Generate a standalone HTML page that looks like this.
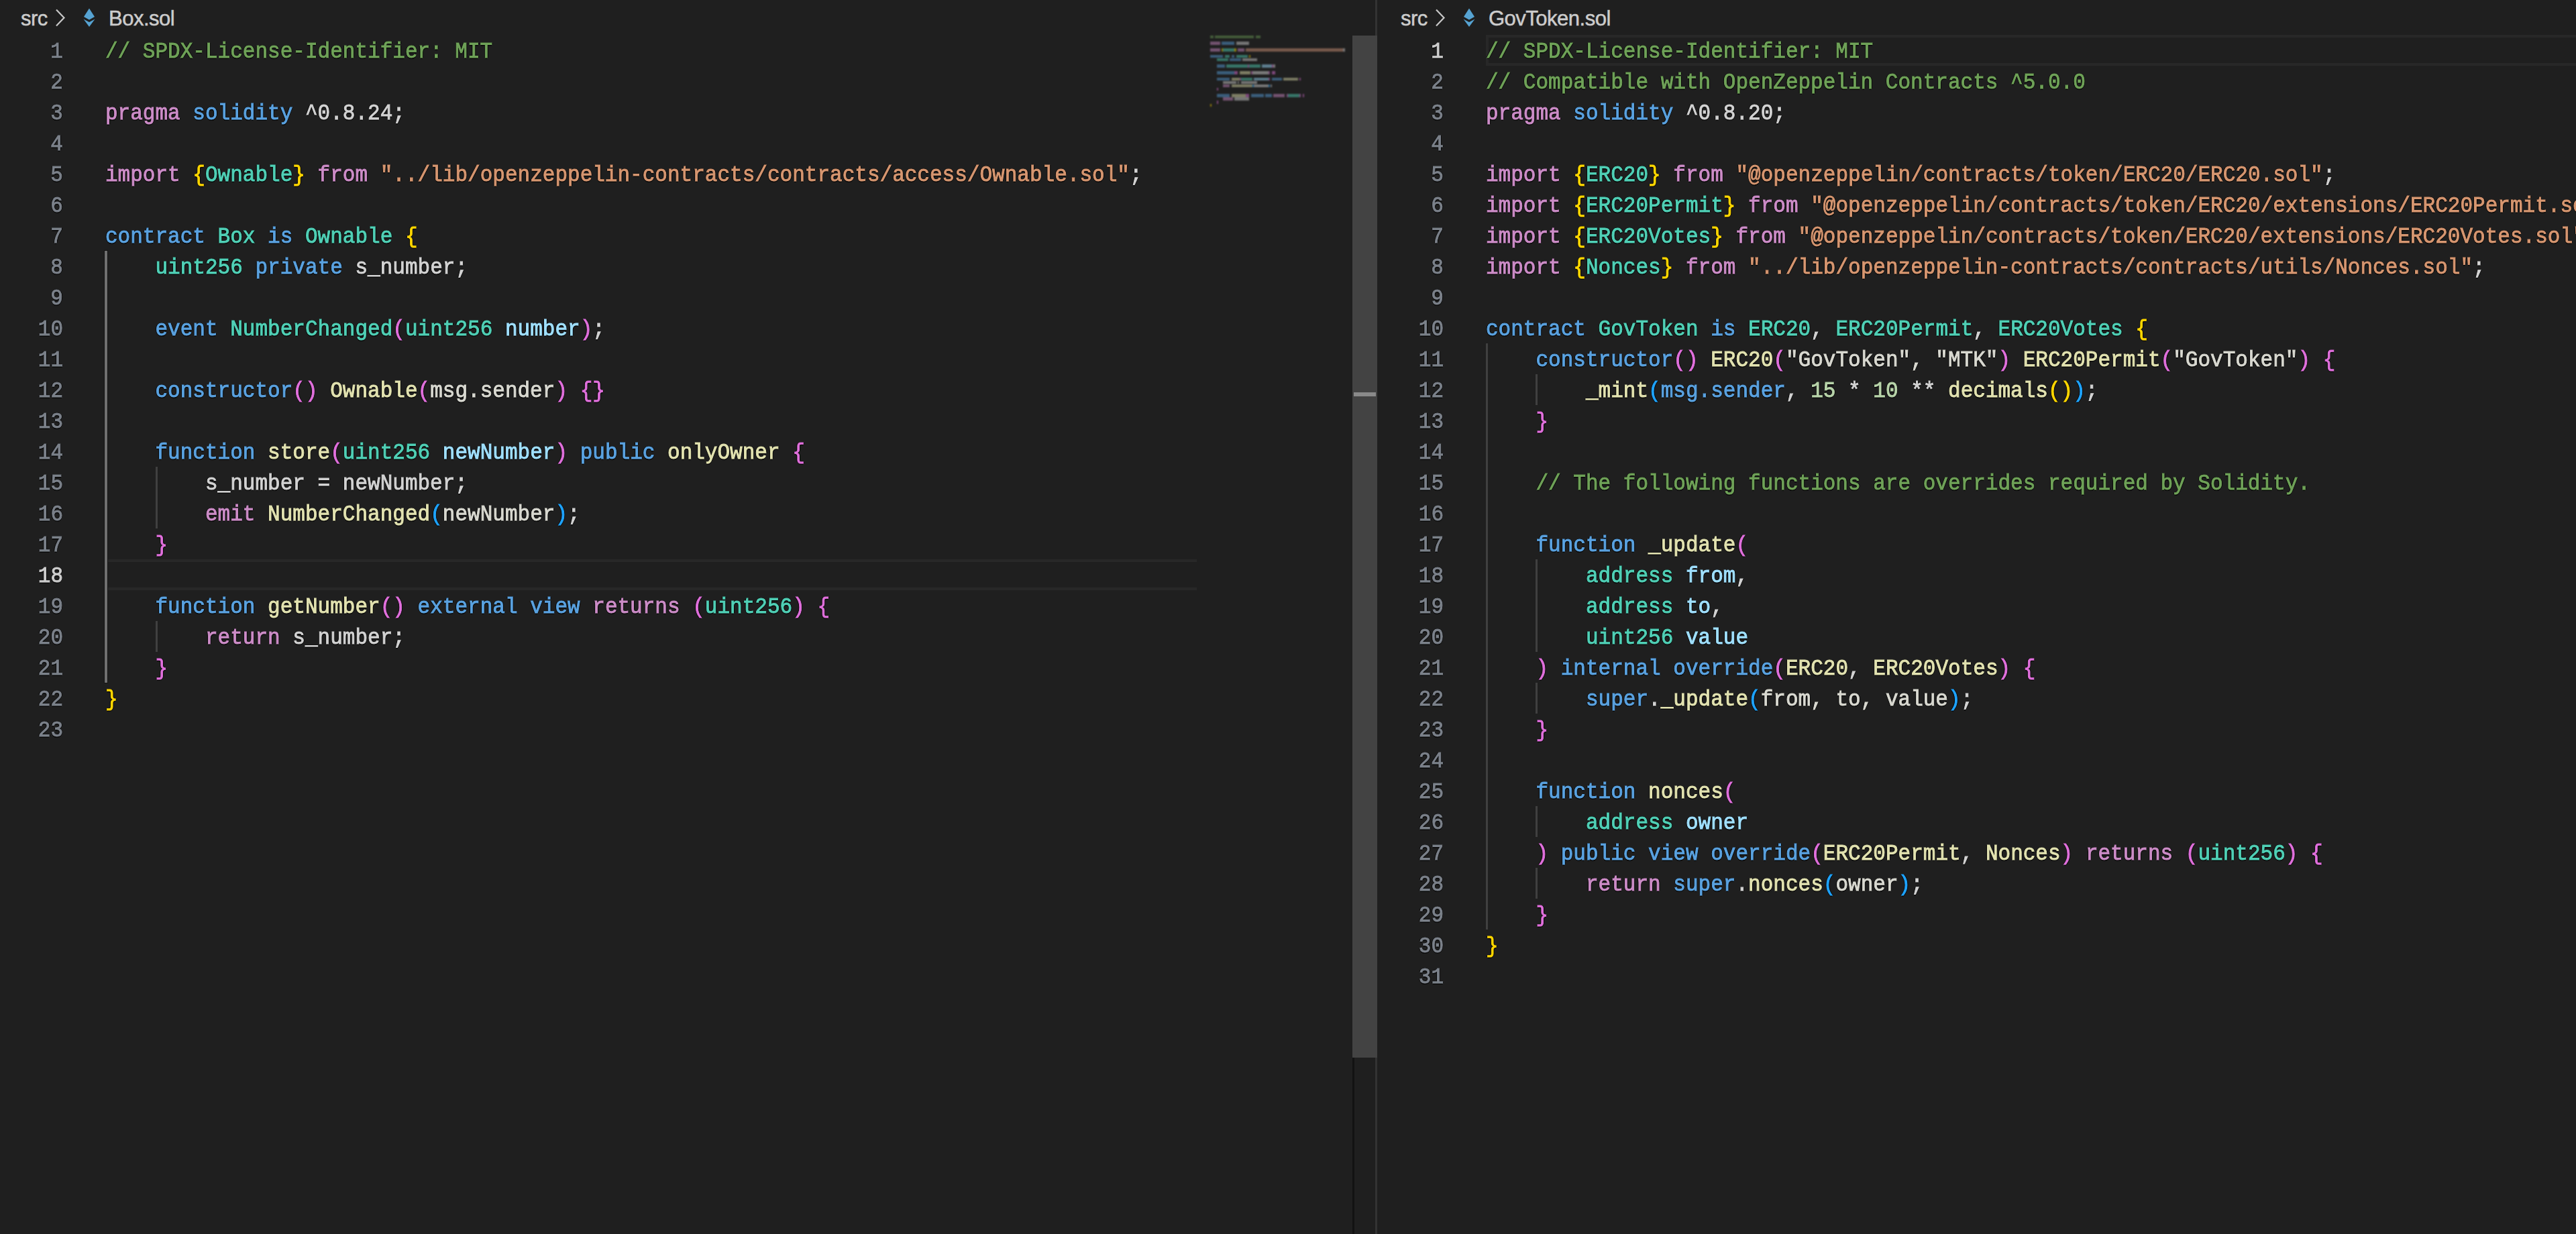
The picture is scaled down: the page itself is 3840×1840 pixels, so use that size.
<!DOCTYPE html>
<html><head><meta charset="utf-8"><style>
html,body{margin:0;padding:0;background:#1f1f1f;width:3840px;height:1840px;overflow:hidden;position:relative}
.code,.ln{position:absolute;font-family:"Liberation Mono",monospace;font-size:33px;line-height:46px;white-space:pre;-webkit-text-stroke:1px currentColor;text-shadow:1.5px 0 0 rgba(0,0,0,.75),-1.5px 0 0 rgba(0,0,0,.75),0 1.5px 0 rgba(0,0,0,.75),0 -1.5px 0 rgba(0,0,0,.75)}
.code{transform:scaleX(0.94026);transform-origin:0 0;color:#cccccc}
.ln{width:120px;text-align:right;color:#7b818a;transform:scaleX(0.94026);transform-origin:100% 0}
.ln.act{color:#cccccc}
.k{color:#5aa2e0}.p{color:#cc8cc7}.t{color:#50d0b6}.f{color:#e2e2b0}.v{color:#a0e0ff}.s{color:#d69670}
.c{color:#6fa258}.n{color:#b8d4aa}.d{color:#d2d2d2}.w{color:#d8d8d0}.y{color:#ffd700}.o{color:#e070dc}.b{color:#1fa4ff}
.cur{position:absolute;height:46px;box-sizing:border-box;border:4px solid #282828;border-right:0}
.g{position:absolute;width:3px;background:#404040}
.ga{background:#707070;width:4px;margin-left:-1px;box-shadow:0 0 0 1px #141414}
.bc{position:absolute;top:0;height:52px;font-family:"Liberation Sans",sans-serif;font-size:31px;letter-spacing:-0.5px;color:#cccccc;white-space:pre;-webkit-text-stroke:0.5px #cccccc}
.bc span,.bc svg{position:absolute}
.mm{position:absolute;left:0;top:0;width:2016px;height:220px;filter:blur(0.9px)}.mm i{position:absolute;height:4.6px;opacity:.5}
.sb{position:absolute}
</style></head><body>
<div class="bc" style="left:0px">
<span style="left:31px;top:9.5px">src</span>
<svg style="left:81px;top:13px" width="18" height="28" viewBox="0 0 18 28"><path d="M3 1.5 L14.5 13.5 L3 25.5" stroke="#c8c8c8" stroke-width="2.2" fill="none"/></svg>
<svg style="left:123px;top:12px" width="20" height="30" viewBox="0 0 20 30"><path d="M10 0.5 L18 13 L10 17.5 L2 13 Z" fill="#56a3d2"/><path d="M1.5 16.5 L10 21 L18.5 16.5 L10 28 Z" fill="#56a3d2"/></svg>
<span style="left:162px;top:9.5px">Box.sol</span>
</div>
<div class="bc" style="left:2057px">
<span style="left:31px;top:9.5px">src</span>
<svg style="left:81px;top:13px" width="18" height="28" viewBox="0 0 18 28"><path d="M3 1.5 L14.5 13.5 L3 25.5" stroke="#c8c8c8" stroke-width="2.2" fill="none"/></svg>
<svg style="left:123px;top:12px" width="20" height="30" viewBox="0 0 20 30"><path d="M10 0.5 L18 13 L10 17.5 L2 13 Z" fill="#56a3d2"/><path d="M1.5 16.5 L10 21 L18.5 16.5 L10 28 Z" fill="#56a3d2"/></svg>
<span style="left:162px;top:9.5px">GovToken.sol</span>
</div>
<div style="position:absolute;left:0;top:0;width:2016px;height:1840px;overflow:hidden">
<div class="cur" style="left:157.0px;top:834px;width:1627px"></div>
<div class="g ga" style="left:157.0px;top:374px;height:644px"></div>
<div class="g" style="left:231.5px;top:696px;height:92px"></div>
<div class="g" style="left:231.5px;top:926px;height:46px"></div>
<div class="ln" style="left:-26.0px;top:54.8px">1</div>
<div class="code" style="left:157.0px;top:54.8px"><span class="c">// SPDX-License-Identifier: MIT</span></div>
<div class="ln" style="left:-26.0px;top:100.8px">2</div>
<div class="ln" style="left:-26.0px;top:146.8px">3</div>
<div class="code" style="left:157.0px;top:146.8px"><span class="p">pragma</span> <span class="k">solidity</span><span class="d"> ^0.8.24;</span></div>
<div class="ln" style="left:-26.0px;top:192.8px">4</div>
<div class="ln" style="left:-26.0px;top:238.8px">5</div>
<div class="code" style="left:157.0px;top:238.8px"><span class="p">import</span> <span class="y">{</span><span class="t">Ownable</span><span class="y">}</span> <span class="p">from</span> <span class="s">&quot;../lib/openzeppelin-contracts/contracts/access/Ownable.sol&quot;</span><span class="d">;</span></div>
<div class="ln" style="left:-26.0px;top:284.8px">6</div>
<div class="ln" style="left:-26.0px;top:330.8px">7</div>
<div class="code" style="left:157.0px;top:330.8px"><span class="k">contract</span> <span class="t">Box</span> <span class="k">is</span> <span class="t">Ownable</span> <span class="y">{</span></div>
<div class="ln" style="left:-26.0px;top:376.8px">8</div>
<div class="code" style="left:157.0px;top:376.8px">    <span class="t">uint256</span> <span class="k">private</span><span class="d"> s_number;</span></div>
<div class="ln" style="left:-26.0px;top:422.8px">9</div>
<div class="ln" style="left:-26.0px;top:468.8px">10</div>
<div class="code" style="left:157.0px;top:468.8px">    <span class="k">event</span> <span class="t">NumberChanged</span><span class="o">(</span><span class="t">uint256</span> <span class="v">number</span><span class="o">)</span><span class="d">;</span></div>
<div class="ln" style="left:-26.0px;top:514.8px">11</div>
<div class="ln" style="left:-26.0px;top:560.8px">12</div>
<div class="code" style="left:157.0px;top:560.8px">    <span class="k">constructor</span><span class="o">()</span> <span class="f">Ownable</span><span class="o">(</span><span class="w">msg.sender</span><span class="o">)</span> <span class="o">{}</span></div>
<div class="ln" style="left:-26.0px;top:606.8px">13</div>
<div class="ln" style="left:-26.0px;top:652.8px">14</div>
<div class="code" style="left:157.0px;top:652.8px">    <span class="k">function</span> <span class="f">store</span><span class="o">(</span><span class="t">uint256</span> <span class="v">newNumber</span><span class="o">)</span> <span class="k">public</span> <span class="f">onlyOwner</span> <span class="o">{</span></div>
<div class="ln" style="left:-26.0px;top:698.8px">15</div>
<div class="code" style="left:157.0px;top:698.8px"><span class="d">        s_number = newNumber;</span></div>
<div class="ln" style="left:-26.0px;top:744.8px">16</div>
<div class="code" style="left:157.0px;top:744.8px">        <span class="p">emit</span> <span class="f">NumberChanged</span><span class="b">(</span><span class="w">newNumber</span><span class="b">)</span><span class="d">;</span></div>
<div class="ln" style="left:-26.0px;top:790.8px">17</div>
<div class="code" style="left:157.0px;top:790.8px">    <span class="o">}</span></div>
<div class="ln act" style="left:-26.0px;top:836.8px">18</div>
<div class="ln" style="left:-26.0px;top:882.8px">19</div>
<div class="code" style="left:157.0px;top:882.8px">    <span class="k">function</span> <span class="f">getNumber</span><span class="o">()</span> <span class="k">external</span> <span class="k">view</span> <span class="p">returns</span> <span class="o">(</span><span class="t">uint256</span><span class="o">)</span> <span class="o">{</span></div>
<div class="ln" style="left:-26.0px;top:928.8px">20</div>
<div class="code" style="left:157.0px;top:928.8px">        <span class="p">return</span><span class="d"> s_number;</span></div>
<div class="ln" style="left:-26.0px;top:974.8px">21</div>
<div class="code" style="left:157.0px;top:974.8px">    <span class="o">}</span></div>
<div class="ln" style="left:-26.0px;top:1020.8px">22</div>
<div class="code" style="left:157.0px;top:1020.8px"><span class="y">}</span></div>
<div class="ln" style="left:-26.0px;top:1066.8px">23</div>
<div class="mm"><i style="left:1804.0px;top:52.6px;width:4.8px;background:#6a9955"></i>
<i style="left:1811.3px;top:52.6px;width:58.1px;background:#6a9955"></i>
<i style="left:1871.8px;top:52.6px;width:7.3px;background:#6a9955"></i>
<i style="left:1804.0px;top:62.3px;width:14.5px;background:#c586c0"></i>
<i style="left:1820.9px;top:62.3px;width:19.4px;background:#569cd6"></i>
<i style="left:1842.7px;top:62.3px;width:19.4px;background:#cccccc"></i>
<i style="left:1804.0px;top:72.1px;width:14.5px;background:#c586c0"></i>
<i style="left:1820.9px;top:72.1px;width:2.4px;background:#ffd700"></i>
<i style="left:1823.4px;top:72.1px;width:16.9px;background:#4ec9b0"></i>
<i style="left:1840.3px;top:72.1px;width:2.4px;background:#ffd700"></i>
<i style="left:1845.1px;top:72.1px;width:9.7px;background:#c586c0"></i>
<i style="left:1857.2px;top:72.1px;width:145.2px;background:#ce9178"></i>
<i style="left:2002.4px;top:72.1px;width:2.4px;background:#cccccc"></i>
<i style="left:1804.0px;top:81.8px;width:19.4px;background:#569cd6"></i>
<i style="left:1825.8px;top:81.8px;width:7.3px;background:#4ec9b0"></i>
<i style="left:1835.5px;top:81.8px;width:4.8px;background:#569cd6"></i>
<i style="left:1842.7px;top:81.8px;width:16.9px;background:#4ec9b0"></i>
<i style="left:1862.1px;top:81.8px;width:2.4px;background:#ffd700"></i>
<i style="left:1813.7px;top:86.7px;width:16.9px;background:#4ec9b0"></i>
<i style="left:1833.0px;top:86.7px;width:16.9px;background:#569cd6"></i>
<i style="left:1852.4px;top:86.7px;width:21.8px;background:#cccccc"></i>
<i style="left:1813.7px;top:96.4px;width:12.1px;background:#569cd6"></i>
<i style="left:1828.2px;top:96.4px;width:31.5px;background:#4ec9b0"></i>
<i style="left:1859.7px;top:96.4px;width:2.4px;background:#da70d6"></i>
<i style="left:1862.1px;top:96.4px;width:16.9px;background:#4ec9b0"></i>
<i style="left:1881.4px;top:96.4px;width:14.5px;background:#9cdcfe"></i>
<i style="left:1896.0px;top:96.4px;width:2.4px;background:#da70d6"></i>
<i style="left:1898.4px;top:96.4px;width:2.4px;background:#cccccc"></i>
<i style="left:1813.7px;top:106.2px;width:26.6px;background:#569cd6"></i>
<i style="left:1840.3px;top:106.2px;width:4.8px;background:#da70d6"></i>
<i style="left:1847.6px;top:106.2px;width:16.9px;background:#dcdcaa"></i>
<i style="left:1864.5px;top:106.2px;width:2.4px;background:#da70d6"></i>
<i style="left:1866.9px;top:106.2px;width:24.2px;background:#d4d4d4"></i>
<i style="left:1891.1px;top:106.2px;width:2.4px;background:#da70d6"></i>
<i style="left:1896.0px;top:106.2px;width:4.8px;background:#da70d6"></i>
<i style="left:1813.7px;top:115.9px;width:19.4px;background:#569cd6"></i>
<i style="left:1835.5px;top:115.9px;width:12.1px;background:#dcdcaa"></i>
<i style="left:1847.6px;top:115.9px;width:2.4px;background:#da70d6"></i>
<i style="left:1850.0px;top:115.9px;width:16.9px;background:#4ec9b0"></i>
<i style="left:1869.3px;top:115.9px;width:21.8px;background:#9cdcfe"></i>
<i style="left:1891.1px;top:115.9px;width:2.4px;background:#da70d6"></i>
<i style="left:1896.0px;top:115.9px;width:14.5px;background:#569cd6"></i>
<i style="left:1912.9px;top:115.9px;width:21.8px;background:#dcdcaa"></i>
<i style="left:1937.1px;top:115.9px;width:2.4px;background:#da70d6"></i>
<i style="left:1823.4px;top:120.8px;width:19.4px;background:#cccccc"></i>
<i style="left:1845.1px;top:120.8px;width:2.4px;background:#cccccc"></i>
<i style="left:1850.0px;top:120.8px;width:24.2px;background:#cccccc"></i>
<i style="left:1823.4px;top:125.7px;width:9.7px;background:#c586c0"></i>
<i style="left:1835.5px;top:125.7px;width:31.5px;background:#dcdcaa"></i>
<i style="left:1866.9px;top:125.7px;width:2.4px;background:#179fff"></i>
<i style="left:1869.3px;top:125.7px;width:21.8px;background:#d4d4d4"></i>
<i style="left:1891.1px;top:125.7px;width:2.4px;background:#179fff"></i>
<i style="left:1893.5px;top:125.7px;width:2.4px;background:#cccccc"></i>
<i style="left:1813.7px;top:130.5px;width:2.4px;background:#da70d6"></i>
<i style="left:1813.7px;top:140.3px;width:19.4px;background:#569cd6"></i>
<i style="left:1835.5px;top:140.3px;width:21.8px;background:#dcdcaa"></i>
<i style="left:1857.2px;top:140.3px;width:4.8px;background:#da70d6"></i>
<i style="left:1864.5px;top:140.3px;width:19.4px;background:#569cd6"></i>
<i style="left:1886.3px;top:140.3px;width:9.7px;background:#569cd6"></i>
<i style="left:1898.4px;top:140.3px;width:16.9px;background:#c586c0"></i>
<i style="left:1917.7px;top:140.3px;width:2.4px;background:#da70d6"></i>
<i style="left:1920.2px;top:140.3px;width:16.9px;background:#4ec9b0"></i>
<i style="left:1937.1px;top:140.3px;width:2.4px;background:#da70d6"></i>
<i style="left:1941.9px;top:140.3px;width:2.4px;background:#da70d6"></i>
<i style="left:1823.4px;top:145.1px;width:14.5px;background:#c586c0"></i>
<i style="left:1840.3px;top:145.1px;width:21.8px;background:#cccccc"></i>
<i style="left:1813.7px;top:150.0px;width:2.4px;background:#da70d6"></i>
<i style="left:1804.0px;top:154.9px;width:2.4px;background:#ffd700"></i></div>
</div>
<div class="sb" style="left:2050px;top:0px;width:3px;height:1840px;background:#333333"></div>
<div class="sb" style="left:2016px;top:53px;width:37px;height:1524px;background:#434343"></div>
<div class="sb" style="left:2018px;top:585px;width:33px;height:6px;background:#8a8a8a"></div>
<div class="sb" style="left:2016px;top:1577px;width:3px;height:263px;background:#121212"></div>
<div style="position:absolute;left:2053px;top:0;width:1787px;height:1840px;overflow:hidden"><div style="position:absolute;left:-2053px;top:0;width:3840px;height:1840px">
<div class="cur" style="left:2214.5px;top:52px;width:1625px"></div>
<div class="g" style="left:2214.5px;top:512px;height:874px"></div>
<div class="g" style="left:2289.0px;top:558px;height:46px"></div>
<div class="g" style="left:2289.0px;top:834px;height:138px"></div>
<div class="g" style="left:2289.0px;top:1018px;height:46px"></div>
<div class="g" style="left:2289.0px;top:1202px;height:46px"></div>
<div class="g" style="left:2289.0px;top:1294px;height:46px"></div>
<div class="ln act" style="left:2031.5px;top:54.8px">1</div>
<div class="code" style="left:2214.5px;top:54.8px"><span class="c">// SPDX-License-Identifier: MIT</span></div>
<div class="ln" style="left:2031.5px;top:100.8px">2</div>
<div class="code" style="left:2214.5px;top:100.8px"><span class="c">// Compatible with OpenZeppelin Contracts ^5.0.0</span></div>
<div class="ln" style="left:2031.5px;top:146.8px">3</div>
<div class="code" style="left:2214.5px;top:146.8px"><span class="p">pragma</span> <span class="k">solidity</span><span class="d"> ^0.8.20;</span></div>
<div class="ln" style="left:2031.5px;top:192.8px">4</div>
<div class="ln" style="left:2031.5px;top:238.8px">5</div>
<div class="code" style="left:2214.5px;top:238.8px"><span class="p">import</span> <span class="y">{</span><span class="t">ERC20</span><span class="y">}</span> <span class="p">from</span> <span class="s">&quot;@openzeppelin/contracts/token/ERC20/ERC20.sol&quot;</span><span class="d">;</span></div>
<div class="ln" style="left:2031.5px;top:284.8px">6</div>
<div class="code" style="left:2214.5px;top:284.8px"><span class="p">import</span> <span class="y">{</span><span class="t">ERC20Permit</span><span class="y">}</span> <span class="p">from</span> <span class="s">&quot;@openzeppelin/contracts/token/ERC20/extensions/ERC20Permit.sol&quot;</span><span class="d">;</span></div>
<div class="ln" style="left:2031.5px;top:330.8px">7</div>
<div class="code" style="left:2214.5px;top:330.8px"><span class="p">import</span> <span class="y">{</span><span class="t">ERC20Votes</span><span class="y">}</span> <span class="p">from</span> <span class="s">&quot;@openzeppelin/contracts/token/ERC20/extensions/ERC20Votes.sol&quot;</span><span class="d">;</span></div>
<div class="ln" style="left:2031.5px;top:376.8px">8</div>
<div class="code" style="left:2214.5px;top:376.8px"><span class="p">import</span> <span class="y">{</span><span class="t">Nonces</span><span class="y">}</span> <span class="p">from</span> <span class="s">&quot;../lib/openzeppelin-contracts/contracts/utils/Nonces.sol&quot;</span><span class="d">;</span></div>
<div class="ln" style="left:2031.5px;top:422.8px">9</div>
<div class="ln" style="left:2031.5px;top:468.8px">10</div>
<div class="code" style="left:2214.5px;top:468.8px"><span class="k">contract</span> <span class="t">GovToken</span> <span class="k">is</span> <span class="t">ERC20</span><span class="d">, </span><span class="t">ERC20Permit</span><span class="d">, </span><span class="t">ERC20Votes</span> <span class="y">{</span></div>
<div class="ln" style="left:2031.5px;top:514.8px">11</div>
<div class="code" style="left:2214.5px;top:514.8px">    <span class="k">constructor</span><span class="o">()</span> <span class="f">ERC20</span><span class="o">(</span><span class="w">&quot;GovToken&quot;, &quot;MTK&quot;</span><span class="o">)</span> <span class="f">ERC20Permit</span><span class="o">(</span><span class="w">&quot;GovToken&quot;</span><span class="o">)</span> <span class="o">{</span></div>
<div class="ln" style="left:2031.5px;top:560.8px">12</div>
<div class="code" style="left:2214.5px;top:560.8px">        <span class="f">_mint</span><span class="b">(</span><span class="k">msg.sender</span><span class="d">, </span><span class="n">15</span><span class="d"> * </span><span class="n">10</span><span class="d"> ** </span><span class="f">decimals</span><span class="y">()</span><span class="b">)</span><span class="d">;</span></div>
<div class="ln" style="left:2031.5px;top:606.8px">13</div>
<div class="code" style="left:2214.5px;top:606.8px">    <span class="o">}</span></div>
<div class="ln" style="left:2031.5px;top:652.8px">14</div>
<div class="ln" style="left:2031.5px;top:698.8px">15</div>
<div class="code" style="left:2214.5px;top:698.8px">    <span class="c">// The following functions are overrides required by Solidity.</span></div>
<div class="ln" style="left:2031.5px;top:744.8px">16</div>
<div class="ln" style="left:2031.5px;top:790.8px">17</div>
<div class="code" style="left:2214.5px;top:790.8px">    <span class="k">function</span> <span class="f">_update</span><span class="o">(</span></div>
<div class="ln" style="left:2031.5px;top:836.8px">18</div>
<div class="code" style="left:2214.5px;top:836.8px">        <span class="t">address</span> <span class="v">from</span><span class="d">,</span></div>
<div class="ln" style="left:2031.5px;top:882.8px">19</div>
<div class="code" style="left:2214.5px;top:882.8px">        <span class="t">address</span> <span class="v">to</span><span class="d">,</span></div>
<div class="ln" style="left:2031.5px;top:928.8px">20</div>
<div class="code" style="left:2214.5px;top:928.8px">        <span class="t">uint256</span> <span class="v">value</span></div>
<div class="ln" style="left:2031.5px;top:974.8px">21</div>
<div class="code" style="left:2214.5px;top:974.8px">    <span class="o">)</span> <span class="k">internal</span> <span class="k">override</span><span class="o">(</span><span class="f">ERC20</span><span class="d">, </span><span class="f">ERC20Votes</span><span class="o">)</span> <span class="o">{</span></div>
<div class="ln" style="left:2031.5px;top:1020.8px">22</div>
<div class="code" style="left:2214.5px;top:1020.8px">        <span class="k">super</span><span class="d">.</span><span class="f">_update</span><span class="b">(</span><span class="w">from, to, value</span><span class="b">)</span><span class="d">;</span></div>
<div class="ln" style="left:2031.5px;top:1066.8px">23</div>
<div class="code" style="left:2214.5px;top:1066.8px">    <span class="o">}</span></div>
<div class="ln" style="left:2031.5px;top:1112.8px">24</div>
<div class="ln" style="left:2031.5px;top:1158.8px">25</div>
<div class="code" style="left:2214.5px;top:1158.8px">    <span class="k">function</span> <span class="f">nonces</span><span class="o">(</span></div>
<div class="ln" style="left:2031.5px;top:1204.8px">26</div>
<div class="code" style="left:2214.5px;top:1204.8px">        <span class="t">address</span> <span class="v">owner</span></div>
<div class="ln" style="left:2031.5px;top:1250.8px">27</div>
<div class="code" style="left:2214.5px;top:1250.8px">    <span class="o">)</span> <span class="k">public</span> <span class="k">view</span> <span class="k">override</span><span class="o">(</span><span class="f">ERC20Permit</span><span class="d">, </span><span class="f">Nonces</span><span class="o">)</span> <span class="p">returns</span> <span class="o">(</span><span class="t">uint256</span><span class="o">)</span> <span class="o">{</span></div>
<div class="ln" style="left:2031.5px;top:1296.8px">28</div>
<div class="code" style="left:2214.5px;top:1296.8px">        <span class="p">return</span> <span class="k">super</span><span class="d">.</span><span class="f">nonces</span><span class="b">(</span><span class="w">owner</span><span class="b">)</span><span class="d">;</span></div>
<div class="ln" style="left:2031.5px;top:1342.8px">29</div>
<div class="code" style="left:2214.5px;top:1342.8px">    <span class="o">}</span></div>
<div class="ln" style="left:2031.5px;top:1388.8px">30</div>
<div class="code" style="left:2214.5px;top:1388.8px"><span class="y">}</span></div>
<div class="ln" style="left:2031.5px;top:1434.8px">31</div>
</div></div>
</body></html>
